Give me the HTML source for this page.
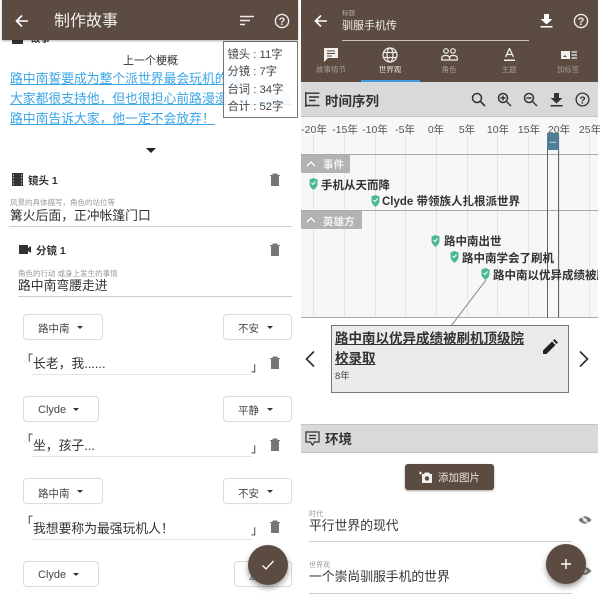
<!DOCTYPE html>
<html><head><meta charset="utf-8">
<style>
html,body{margin:0;padding:0;background:#fff}
#r{position:relative;width:600px;height:596px;overflow:hidden;background:#fff;font-family:"Liberation Sans","Noto Sans CJK SC",sans-serif;color:#333}
#r div,#r svg{position:absolute}
.t{white-space:nowrap;line-height:1;margin-top:2px}
.b{background:#5b4b40}
.ln{height:1px;background:#ccc}
.btn{background:#fff;border:1px solid #ddd;border-radius:4px;box-sizing:border-box;height:26px;box-shadow:0 0 1px #eee}
.tri{width:0;height:0;border-left:3.5px solid transparent;border-right:3.5px solid transparent;border-top:3.5px solid #333}
.fab{width:40px;height:40px;border-radius:50%;background:#5b4b40;box-shadow:0 3px 6px rgba(0,0,0,.4)}
.tick{font-size:10.5px;color:#555;width:40px;text-align:center;top:123px}
.vg{width:1px;background:#e6e6e6;top:135px;height:183px}
.evt{font-size:11.5px;font-weight:bold;color:#333}
.tabl{font-size:7.5px;color:#a89c92;width:60px;text-align:center;top:63.5px}
.qm{font-weight:bold}
</style></head><body><div id="r">

<!-- LEFT -->
<div class="b" style="left:2px;top:0;width:296px;height:40px;box-shadow:0 1px 2px rgba(0,0,0,.3);z-index:3"></div>
<svg style="left:14px;top:13px;z-index:4" width="16" height="16" viewBox="0 0 16 16"><path d="M14 8H3M8 2.5L2.5 8L8 13.5" fill="none" stroke="#fff" stroke-width="1.6"/></svg>
<div class="t" style="left:54px;top:12px;font-size:16px;color:#f2efec;z-index:4">制作故事</div>
<svg style="left:240px;top:15px;z-index:4" width="15" height="12" viewBox="0 0 15 12"><path d="M0 1.5H14M0 5.5H10M0 9.5H5" stroke="#eee" stroke-width="1.6"/></svg>
<svg style="left:274px;top:13px;z-index:4" width="16" height="16" viewBox="0 0 16 16"><circle cx="8" cy="8" r="6.6" fill="none" stroke="#eee" stroke-width="1.4"/><text x="8" y="12" font-size="11" fill="#eee" text-anchor="middle" font-family="Liberation Sans" class="qm">?</text></svg>
<div style="left:12px;top:36px;width:11px;height:8px;background:#333"></div>
<div class="t" style="left:31px;top:33px;font-size:9.5px;font-weight:bold">故事</div>
<div class="t" style="left:123px;top:54px;font-size:11px">上一个梗概</div>
<div class="t" style="left:10px;top:70.5px;font-size:12.8px;color:#3aa5e8;text-decoration:underline">路中南誓要成为整个派世界最会玩机的人</div>
<div class="t" style="left:10px;top:90.5px;font-size:12.8px;color:#3aa5e8;text-decoration:underline">大家都很支持他，但也很担心前路漫漫，<span style="color:#a8d8f5">困难重重</span></div>
<div class="t" style="left:10px;top:110.5px;font-size:12.8px;color:#3aa5e8;text-decoration:underline">路中南告诉大家，他一定不会放弃！</div>
<div style="left:223px;top:41px;width:75px;height:77px;box-sizing:border-box;border:1px solid #777;background:rgba(255,255,255,.85);z-index:2"></div>
<div class="t" style="left:227.5px;top:45px;font-size:11.3px;z-index:3;line-height:17.3px;white-space:pre;color:#444">镜头 : 11字
分镜 : 7字
台词 : 34字
合计 : 52字</div>
<div style="left:146px;top:148px;width:0;height:0;border-left:5px solid transparent;border-right:5px solid transparent;border-top:5px solid #222"></div>

<svg style="left:12px;top:173px" width="11" height="13" viewBox="0 0 11 13"><path d="M0 0H11V13H0Z" fill="#333"/><path d="M1 2H2M1 5H2M1 8H2M1 11H2M9 2H10M9 5H10M9 8H10M9 11H10" stroke="#fff" stroke-width="1"/></svg>
<div class="t" style="left:28px;top:174px;font-size:10.5px;font-weight:bold">镜头 1</div>
<svg style="left:269px;top:172px" width="12" height="14" viewBox="0 0 12 14"><path d="M1 3H11V4H10V14H2V4H1ZM3.5 1.5H8.5V3H3.5Z" fill="#777"/></svg>
<div class="t" style="left:10px;top:197px;font-size:7.5px;color:#999">风景的具体描写，角色的站位等</div>
<div class="t" style="left:10px;top:208px;font-size:12.8px">篝火后面，正冲帐篷门口</div>
<div class="ln" style="left:9px;top:226px;width:283px"></div>

<svg style="left:19px;top:245px" width="12" height="9" viewBox="0 0 12 9"><path d="M0 0H9V3L12 1V8L9 6V9H0Z" fill="#333"/></svg>
<div class="t" style="left:36px;top:244px;font-size:10.5px;font-weight:bold">分镜 1</div>
<svg style="left:269px;top:242px" width="12" height="14" viewBox="0 0 12 14"><path d="M1 3H11V4H10V14H2V4H1ZM3.5 1.5H8.5V3H3.5Z" fill="#777"/></svg>
<div class="t" style="left:18px;top:268px;font-size:7.5px;color:#999">角色的行动 或身上发生的事情</div>
<div class="t" style="left:18px;top:278px;font-size:12.8px">路中南弯腰走进</div>
<div class="ln" style="left:18px;top:296px;width:274px"></div>

<!-- dialogue 1 -->
<div class="btn" style="left:23px;top:314px;width:80px"></div>
<div class="t" style="left:38px;top:322px;font-size:10.5px;color:#444">路中南</div>
<div class="tri" style="left:77px;top:326px"></div>
<div class="btn" style="left:223px;top:314px;width:69px"></div>
<div class="t" style="left:238px;top:322px;font-size:10.5px;color:#444">不安</div>
<div class="tri" style="left:267px;top:326px"></div>
<div class="t" style="left:21px;top:352px;font-size:12px;color:#333">「</div>
<div class="t" style="left:33px;top:356px;font-size:12.8px;color:#333">长老，我......</div>
<div class="t" style="left:251px;top:359px;font-size:12px;color:#333">」</div>
<div class="ln" style="left:32px;top:374px;width:220px;background:#e2e2e2"></div>
<svg style="left:269px;top:355px" width="12" height="14" viewBox="0 0 12 14"><path d="M1 3H11V4H10V14H2V4H1ZM3.5 1.5H8.5V3H3.5Z" fill="#777"/></svg>

<!-- dialogue 2 -->
<div class="btn" style="left:23px;top:396px;width:76px"></div>
<div class="t" style="left:38px;top:403px;font-size:11px;color:#444">Clyde</div>
<div class="tri" style="left:73px;top:408px"></div>
<div class="btn" style="left:223px;top:396px;width:69px"></div>
<div class="t" style="left:238px;top:404px;font-size:10.5px;color:#444">平静</div>
<div class="tri" style="left:267px;top:408px"></div>
<div class="t" style="left:21px;top:432px;font-size:12px">「</div>
<div class="t" style="left:33px;top:438px;font-size:12.8px">坐，孩子...</div>
<div class="t" style="left:251px;top:440px;font-size:12px">」</div>
<div class="ln" style="left:32px;top:456px;width:220px;background:#e2e2e2"></div>
<svg style="left:269px;top:437px" width="12" height="14" viewBox="0 0 12 14"><path d="M1 3H11V4H10V14H2V4H1ZM3.5 1.5H8.5V3H3.5Z" fill="#777"/></svg>

<!-- dialogue 3 -->
<div class="btn" style="left:23px;top:478px;width:80px"></div>
<div class="t" style="left:38px;top:487px;font-size:10.5px;color:#444">路中南</div>
<div class="tri" style="left:77px;top:490px"></div>
<div class="btn" style="left:223px;top:478px;width:69px"></div>
<div class="t" style="left:238px;top:487px;font-size:10.5px;color:#444">不安</div>
<div class="tri" style="left:267px;top:490px"></div>
<div class="t" style="left:21px;top:514px;font-size:12px">「</div>
<div class="t" style="left:33px;top:521px;font-size:12.8px">我想要称为最强玩机人！</div>
<div class="t" style="left:251px;top:522px;font-size:12px">」</div>
<div class="ln" style="left:32px;top:539px;width:220px;background:#e2e2e2"></div>
<svg style="left:269px;top:519px" width="12" height="14" viewBox="0 0 12 14"><path d="M1 3H11V4H10V14H2V4H1ZM3.5 1.5H8.5V3H3.5Z" fill="#777"/></svg>

<!-- dialogue 4 -->
<div class="btn" style="left:23px;top:561px;width:76px"></div>
<div class="t" style="left:38px;top:568px;font-size:11px;color:#444">Clyde</div>
<div class="tri" style="left:73px;top:573px"></div>
<div class="btn" style="left:234px;top:561px;width:58px"></div>
<div class="t" style="left:249px;top:569px;font-size:10.5px;color:#444">友</div>

<div class="fab" style="left:248px;top:545px"></div>
<svg style="left:261px;top:558px" width="14" height="14" viewBox="0 0 14 14"><path d="M1.5 7.5L5 11L12.5 3" fill="none" stroke="#fff" stroke-width="1.3"/></svg>

<!-- RIGHT -->
<div class="b" style="left:301px;top:0;width:297px;height:82px"></div>
<svg style="left:313px;top:13px" width="16" height="16" viewBox="0 0 16 16"><path d="M14 8H3M8 2.5L2.5 8L8 13.5" fill="none" stroke="#fff" stroke-width="1.6"/></svg>
<div class="t" style="left:342px;top:9px;font-size:6.5px;color:#b5aaa2">标题</div>
<div class="t" style="left:342px;top:18.5px;font-size:11px;color:#f2efec">驯服手机传</div>
<div style="left:342px;top:40px;width:187px;height:1px;background:#c8c2bc"></div>
<svg style="left:540px;top:14px" width="13" height="14" viewBox="0 0 13 14"><path d="M4 0H9V5H12.5L6.5 10.5L.5 5H4ZM.5 12H12.5V13.5H.5Z" fill="#fff"/></svg>
<svg style="left:573px;top:13px" width="16" height="16" viewBox="0 0 16 16"><circle cx="8" cy="8" r="6.6" fill="none" stroke="#eee" stroke-width="1.4"/><text x="8" y="12" font-size="11" fill="#eee" text-anchor="middle" font-family="Liberation Sans" class="qm">?</text></svg>

<svg style="left:323px;top:47px" width="16" height="16" viewBox="0 0 16 16"><path d="M1 1H15V11H5L1 15Z" fill="#f2efec"/><path d="M4 4H12M4 6.5H12M4 9H9" stroke="#5b4b40" stroke-width="1"/></svg>
<svg style="left:382px;top:47px" width="16" height="16" viewBox="0 0 16 16"><g fill="none" stroke="#f2efec" stroke-width="1.2"><circle cx="8" cy="8" r="7"/><ellipse cx="8" cy="8" rx="3" ry="7"/><path d="M1.5 5.5H14.5M1.5 10.5H14.5"/></g></svg>
<svg style="left:441px;top:48px" width="17" height="13" viewBox="0 0 17 13"><g fill="none" stroke="#f2efec" stroke-width="1.2"><circle cx="5" cy="3" r="2.3"/><circle cx="12" cy="3" r="2.3"/><path d="M.7 12V10Q.7 7.5 5 7.5Q8.5 7.5 8.5 10V12ZM8.5 10Q8.5 7.5 12 7.5Q16.3 7.5 16.3 10V12H8.5"/></g></svg>
<svg style="left:503px;top:48px" width="13" height="14" viewBox="0 0 13 14"><path d="M2.5 9L6.5 .5L10.5 9M3.5 6.5H9.5" fill="none" stroke="#f2efec" stroke-width="1.3"/><path d="M1 11.5H12V13H1Z" fill="#f2efec"/></svg>
<svg style="left:561px;top:50px" width="16" height="10" viewBox="0 0 16 10"><path d="M0 1H9V9H0Z" fill="#f2efec"/><path d="M10.5 2H16M10.5 5H16M10.5 8H16" stroke="#f2efec" stroke-width="1.2"/><path d="M2 7L4 5L6 7Z" fill="#5b4b40"/></svg>
<div class="t tabl" style="left:301px">故事情节</div>
<div class="t tabl" style="left:360px;color:#e8e4e0">世界观</div>
<div class="t tabl" style="left:419px">角色</div>
<div class="t tabl" style="left:479px">主题</div>
<div class="t tabl" style="left:538px">加标签</div>
<div style="left:361px;top:80px;width:59px;height:2px;background:#3d9be0"></div>

<!-- timeline header -->
<div style="left:301px;top:82px;width:297px;height:35px;background:#d9d9d9;border-bottom:1px solid #c4c4c4;box-sizing:border-box"></div>
<svg style="left:305px;top:92px" width="15" height="15" viewBox="0 0 15 15"><path d="M.8 0V15M.8 1.2H14.5M4 5H14M4 8.5H10.5M.8 13.5H14.5" fill="none" stroke="#333" stroke-width="1.4"/></svg>
<div class="t" style="left:325px;top:93px;font-size:13.5px;font-weight:bold;color:#333">时间序列</div>
<svg style="left:471px;top:92px" width="15" height="15" viewBox="0 0 15 15"><circle cx="6" cy="6" r="4.5" fill="none" stroke="#333" stroke-width="1.5"/><path d="M9.5 9.5L14 14" stroke="#333" stroke-width="1.6"/></svg>
<svg style="left:497px;top:92px" width="15" height="15" viewBox="0 0 15 15"><circle cx="6" cy="6" r="4.5" fill="none" stroke="#333" stroke-width="1.5"/><path d="M9.5 9.5L14 14M3.5 6H8.5M6 3.5V8.5" stroke="#333" stroke-width="1.4"/></svg>
<svg style="left:523px;top:92px" width="15" height="15" viewBox="0 0 15 15"><circle cx="6" cy="6" r="4.5" fill="none" stroke="#333" stroke-width="1.5"/><path d="M9.5 9.5L14 14M3.5 6H8.5" stroke="#333" stroke-width="1.4"/></svg>
<svg style="left:550px;top:92px" width="13" height="15" viewBox="0 0 13 15"><path d="M4 1H9V6H12.5L6.5 11.5L.5 6H4ZM.5 13H12.5V14.5H.5Z" fill="#333"/></svg>
<svg style="left:575px;top:92px" width="15" height="15" viewBox="0 0 16 16"><circle cx="8" cy="8" r="6.8" fill="none" stroke="#333" stroke-width="1.4"/><text x="8" y="12" font-size="11" fill="#333" text-anchor="middle" font-family="Liberation Sans" class="qm">?</text></svg>

<!-- timeline -->
<div style="left:301px;top:117px;width:297px;height:201px;background:#f7f7f7"></div>
<div class="vg" style="left:313px"></div><div class="vg" style="left:344px"></div><div class="vg" style="left:375px"></div><div class="vg" style="left:405px"></div><div class="vg" style="left:436px"></div><div class="vg" style="left:467px"></div><div class="vg" style="left:497px"></div><div class="vg" style="left:528px"></div><div class="vg" style="left:559px"></div><div class="vg" style="left:589px"></div>
<div class="t tick" style="left:294px">-20年</div>
<div class="t tick" style="left:325px">-15年</div>
<div class="t tick" style="left:355px">-10年</div>
<div class="t tick" style="left:385px">-5年</div>
<div class="t tick" style="left:416px">0年</div>
<div class="t tick" style="left:447px">5年</div>
<div class="t tick" style="left:478px">10年</div>
<div class="t tick" style="left:509px">15年</div>
<div class="t tick" style="left:539px">20年</div>
<div class="t tick" style="left:570px">25年</div>
<div style="left:301px;top:154px;width:297px;height:1px;background:#aaa"></div>
<div style="left:301px;top:210px;width:297px;height:1px;background:#aaa"></div>
<div style="left:301px;top:317px;width:297px;height:1px;background:#aaa"></div>
<div style="left:547px;top:150px;width:1px;height:168px;background:#666"></div>
<div style="left:558px;top:150px;width:1px;height:168px;background:#666"></div>
<div style="left:547px;top:133px;width:12px;height:17px;background:#4f7f97"></div>
<div class="t" style="left:547px;top:135px;width:12px;text-align:center;font-size:8px;color:#fff;font-weight:bold">...</div>

<div style="left:301px;top:155px;width:49px;height:18px;background:#b3b3b3"></div>
<svg style="left:306px;top:161px" width="10" height="6" viewBox="0 0 10 6"><path d="M1 5L5 1L9 5" fill="none" stroke="#fff" stroke-width="1.3"/></svg>
<div class="t" style="left:323px;top:158px;font-size:10.5px;font-weight:bold;color:#f2f2f2">事件</div>
<div style="left:301px;top:211px;width:61px;height:18px;background:#b3b3b3"></div>
<svg style="left:306px;top:217px" width="10" height="6" viewBox="0 0 10 6"><path d="M1 5L5 1L9 5" fill="none" stroke="#fff" stroke-width="1.3"/></svg>
<div class="t" style="left:323px;top:215px;font-size:10.5px;font-weight:bold;color:#f2f2f2">英雄方</div>

<svg style="left:309px;top:178px" width="9" height="12" viewBox="0 0 9 12"><path d="M.5 1.5L4.5 0L8.5 1.5V6Q8.5 9 4.5 12Q.5 9 .5 6Z" fill="#4db894"/><path d="M2.5 5L4 6.5L6.5 3.5" fill="none" stroke="#fff" stroke-width="1"/></svg>
<div class="t evt" style="left:321px;top:179px">手机从天而降</div>
<svg style="left:371px;top:195px" width="9" height="12" viewBox="0 0 9 12"><path d="M.5 1.5L4.5 0L8.5 1.5V6Q8.5 9 4.5 12Q.5 9 .5 6Z" fill="#4db894"/><path d="M2.5 5L4 6.5L6.5 3.5" fill="none" stroke="#fff" stroke-width="1"/></svg>
<div class="t evt" style="left:382px;top:195px">Clyde 带领族人扎根派世界</div>
<svg style="left:431px;top:235px" width="9" height="12" viewBox="0 0 9 12"><path d="M.5 1.5L4.5 0L8.5 1.5V6Q8.5 9 4.5 12Q.5 9 .5 6Z" fill="#4db894"/><path d="M2.5 5L4 6.5L6.5 3.5" fill="none" stroke="#fff" stroke-width="1"/></svg>
<div class="t evt" style="left:444px;top:235px">路中南出世</div>
<svg style="left:450px;top:251px" width="9" height="12" viewBox="0 0 9 12"><path d="M.5 1.5L4.5 0L8.5 1.5V6Q8.5 9 4.5 12Q.5 9 .5 6Z" fill="#4db894"/><path d="M2.5 5L4 6.5L6.5 3.5" fill="none" stroke="#fff" stroke-width="1"/></svg>
<div class="t evt" style="left:462px;top:252px">路中南学会了刷机</div>
<svg style="left:481px;top:268px" width="9" height="12" viewBox="0 0 9 12"><path d="M.5 1.5L4.5 0L8.5 1.5V6Q8.5 9 4.5 12Q.5 9 .5 6Z" fill="#4db894"/><path d="M2.5 5L4 6.5L6.5 3.5" fill="none" stroke="#fff" stroke-width="1"/></svg>
<div style="left:493px;top:268px;width:105px;height:16px;overflow:hidden"><div class="t evt" style="left:0;top:1px">路中南以优异成绩被刷机顶级院校录取</div></div>
<svg style="left:440px;top:278px" width="60" height="50" viewBox="0 0 60 50"><path d="M46 2L11 48" stroke="#999" stroke-width="1.2"/></svg>

<!-- detail card -->
<div style="left:331px;top:325px;width:238px;height:68px;box-sizing:border-box;border:1px solid #777;background:#ebebeb"></div>
<div class="t" style="left:335px;top:330px;font-size:13.5px;font-weight:bold;color:#333;text-decoration:underline">路中南以优异成绩被刷机顶级院</div>
<div class="t" style="left:335px;top:350px;font-size:13.5px;font-weight:bold;color:#333;text-decoration:underline">校录取</div>
<div class="t" style="left:335px;top:370px;font-size:9.5px;color:#444">8年</div>
<svg style="left:543px;top:339px" width="15" height="15" viewBox="0 0 15 15"><path d="M0 15V11.5L9 2.5L12.5 6L3.5 15ZM10 1.5L11.5 0L15 3.5L13.5 5Z" fill="#222"/></svg>
<svg style="left:304px;top:350px" width="12" height="18" viewBox="0 0 12 18"><path d="M10 1.5L2.5 9L10 16.5" fill="none" stroke="#333" stroke-width="1.7"/></svg>
<svg style="left:578px;top:350px" width="12" height="18" viewBox="0 0 12 18"><path d="M2 1.5L9.5 9L2 16.5" fill="none" stroke="#333" stroke-width="1.7"/></svg>

<!-- environment -->
<div style="left:301px;top:424px;width:297px;height:29px;box-sizing:border-box;background:#d9d9d9;border-top:1px solid #c4c4c4;border-bottom:1px solid #c4c4c4"></div>
<svg style="left:305px;top:431px" width="15" height="15" viewBox="0 0 15 15"><path d="M1 1H14V11H9.5L7.5 14L5.5 11H1ZM4 4.5H11M4 7.5H11" fill="none" stroke="#333" stroke-width="1.2"/></svg>
<div class="t" style="left:325px;top:431px;font-size:13.5px;font-weight:bold;color:#333">环境</div>

<div class="b" style="left:405px;top:464px;width:89px;height:26px;border-radius:3px;box-shadow:0 1px 2px rgba(0,0,0,.35)"></div>
<svg style="left:419px;top:471px" width="13" height="12" viewBox="0 0 13 12"><path d="M3 3H5L6 1.5H10L11 3H13V12H3Z" fill="#f2efec"/><circle cx="8" cy="7.5" r="2.2" fill="#5b4b40"/><path d="M0 2H3M1.5 .5V3.5" stroke="#f2efec" stroke-width="1"/></svg>
<div class="t" style="left:438px;top:471px;font-size:10.5px;color:#e8e4e0">添加图片</div>

<div class="t" style="left:309px;top:509px;font-size:7px;color:#999">时代</div>
<div class="t" style="left:309px;top:518px;font-size:12.8px;color:#333">平行世界的现代</div>
<div class="ln" style="left:309px;top:541px;width:263px"></div>
<svg style="left:578px;top:514px" width="14" height="12" viewBox="0 0 14 12"><path d="M.5 6Q7 -1.5 13.5 6Q7 13.5 .5 6Z" fill="#777"/><circle cx="7" cy="6" r="1.8" fill="#ddd"/><path d="M2 1L12 11" stroke="#fff" stroke-width="1.3"/></svg>
<div class="t" style="left:309px;top:560px;font-size:7px;color:#999">世界观</div>
<div class="t" style="left:309px;top:569px;font-size:12.8px;color:#333">一个崇尚驯服手机的世界</div>
<div class="ln" style="left:309px;top:593px;width:263px"></div>
<svg style="left:578px;top:565px" width="14" height="12" viewBox="0 0 14 12"><path d="M.5 6Q7 -1.5 13.5 6Q7 13.5 .5 6Z" fill="#777"/><circle cx="7" cy="6" r="1.8" fill="#ddd"/></svg>

<div class="fab" style="left:546px;top:544px"></div>
<svg style="left:560px;top:558px" width="12" height="12" viewBox="0 0 12 12"><path d="M6 1V11M1 6H11" stroke="#fff" stroke-width="1.4"/></svg>

</div></body></html>
